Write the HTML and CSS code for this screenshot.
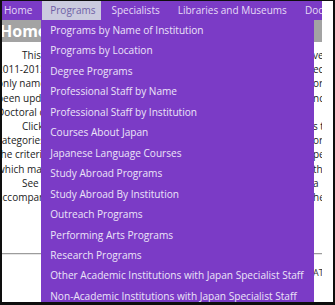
FILE: index.html
```html
<!DOCTYPE html>
<html lang="en">
<head>
<meta charset="utf-8">
<title>Home</title>
<link rel="stylesheet" href="styles.css">
</head>
<body>
<div class="frame">
  <div class="page">
    <nav class="menubar">
      <ul class="menu">
        <li class="mi">Home</li>
        <li class="mi active">Programs
          <ul class="dropdown">
            <li>Programs by Name of Institution</li>
            <li>Programs by Location</li>
            <li>Degree Programs</li>
            <li>Professional Staff by Name</li>
            <li>Professional Staff by Institution</li>
            <li>Courses About Japan</li>
            <li>Japanese Language Courses</li>
            <li>Study Abroad Programs</li>
            <li>Study Abroad By Institution</li>
            <li>Outreach Programs</li>
            <li>Performing Arts Programs</li>
            <li>Research Programs</li>
            <li>Other Academic Institutions with Japan Specialist Staff</li>
            <li>Non-Academic Institutions with Japan Specialist Staff</li>
          </ul>
        </li>
        <li class="mi">Specialists</li>
        <li class="mi">Libraries and Museums</li>
        <li class="mi">Documents</li>
      </ul>
    </nav>
    <h1 class="title">Home</h1>
    <div class="content">
      <div class="ln first"><span class="l">This directory is based on the results of the</span><span class="r">vey</span></div>
      <div class="ln"><span class="l">2011-2012 survey of Japan studies and specialists</span><span class="r">ecia</span></div>
      <div class="ln"><span class="l">only names of those who responded with inform</span><span class="r">orm</span></div>
      <div class="ln"><span class="l">been updated to reflect the most recent and inclu</span><span class="r">nclu</span></div>
      <div class="ln"><span class="l">Doctoral candidates are also listed.</span><span class="r"></span></div>
      <div class="ln first"><span class="l">Click on the menu above to browse the lists</span><span class="r">s t</span></div>
      <div class="ln"><span class="l">categories of programs and specialists in ord</span><span class="r">ord</span></div>
      <div class="ln"><span class="l">the criteria you select, or search for spe</span><span class="r">pe</span></div>
      <div class="ln"><span class="l">which match your interests in Japan with</span><span class="r">th</span></div>
      <div class="ln first"><span class="l">See the introduction for details of the data a</span><span class="r">a</span></div>
      <div class="ln"><span class="l">accompanying notes and definitions used in the</span><span class="r">he</span></div>
    </div>
    <hr class="rule">
    <div class="foot"><span class="l">JAPAN SPECIALIST INFORM</span><span class="r">ATION</span></div>
  </div>
</div>
</body>
</html>
```

FILE: styles.css
```css
* { box-sizing: border-box; }
html, body { margin: 0; padding: 0; background: #fff; }
body { font-family: "Open Sans", "Noto Sans", sans-serif; }

.frame {
  width: 335px;
  height: 305px;
  border-style: solid;
  border-color: #0e0e0e;
  border-width: 1px 2px 3px 2px;
  background: #fff;
  overflow: hidden;
}

.page {
  width: 320px;
  height: 100%;
  overflow: hidden;
  position: relative;
  color: #222;
}

.menubar {
  background: #7b3bc6;
  height: 19px;
}
.menu {
  list-style: none;
  margin: 0 0 0 -6px;
  padding: 0;
  display: flex;
  white-space: nowrap;
}
.mi {
  position: relative;
  height: 19px;
  line-height: 19px;
  padding: 0 8px;
  margin-right: 2px;
  font-size: 10px;
  color: #e6dcf6;
}
.mi.active {
  background: #cbcbdf;
  color: #6f5fa6;
  padding-right: 6px;
}

.dropdown {
  list-style: none;
  margin: 0;
  padding: 0;
  position: absolute;
  top: 100%;
  left: -1px;
  width: 273px;
  height: 300px;
  background: #7b3bc6;
  z-index: 5;
}
.dropdown li {
  height: 20.46px;
  line-height: 20.46px;
  padding-left: 9px;
  font-size: 10.1px;
  color: #ece4f8;
}

.title {
  margin: 0;
  height: 22px;
  line-height: 22px;
  background: #a3a3a3;
  color: #fff;
  font-size: 16px;
  font-weight: 700;
  text-indent: -2px;
}

.content {
  margin: 6px 0 0 -5px;
  font-size: 10px;
}
.ln, .foot {
  display: grid;
  grid-template-columns: 316px auto;
  white-space: nowrap;
}
.ln {
  height: 14.2px;
  line-height: 14.2px;
}
.ln .l, .foot .l { overflow: hidden; }
.ln.first .l { padding-left: 25px; }

.rule {
  margin: 49px 0 0 -2px;
  border: 0;
  border-top: 1px solid #9c9c9c;
  border-bottom: 1px solid #e6e6e6;
  height: 0;
}

.foot {
  margin: 11px 0 0 -5px;
  font-size: 9px;
  line-height: 14px;
  color: #333;
}
.foot .l { padding-left: 120px; }
```
